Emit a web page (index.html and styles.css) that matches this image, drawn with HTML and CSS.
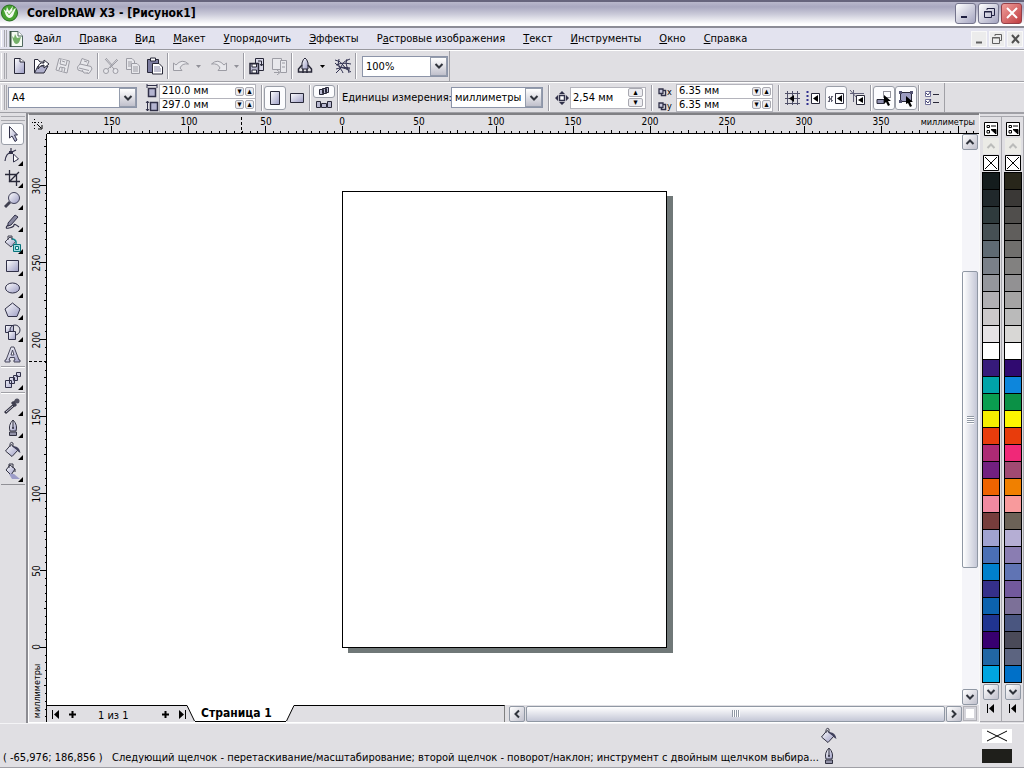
FILE: index.html
```html
<!DOCTYPE html>
<html lang="ru">
<head>
<meta charset="utf-8">
<title>CorelDRAW X3 - [Рисунок1]</title>
<link rel="stylesheet" href="styles.css">
</head>
<body>
<svg class="defs" aria-hidden="true">
  <defs>
    <linearGradient id="g" x1="0" y1="0" x2="1" y2="1"><stop offset="0" stop-color="#fff"/><stop offset="1" stop-color="#9c9cc4"/></linearGradient>
    <symbol id="down" viewBox="0 0 10 8"><path d="M1.5 2 5 5.5 8.500 2" fill="none" stroke="#30343c" stroke-width="2"/></symbol>
    <symbol id="flyout" viewBox="0 0 5 5"><path d="M5 0V5H0z" fill="#000"/></symbol>
    <symbol id="bucket" viewBox="0 0 18 18"><path d="M1.500 10 7 3.500 14 9 8 15.500z" fill="url(#g)" stroke="#303040"/><path d="M6 6V2.500Q7 .5 9 2V6" fill="none" stroke="#404050"/><path d="M8 5.500Q15 4 16.500 12 14 11 13 9z" fill="#40405c"/></symbol>
    <symbol id="pen" viewBox="0 0 18 18"><path d="M9 1Q4 6 6 12H12Q14 6 9 1z" fill="url(#g)" stroke="#303040"/><path d="M9 2V9" stroke="#303040"/><circle cx="9" cy="9" r="1" fill="#303040"/><path d="M5.500 13H12.500V16.500H5.500z" fill="#9292a8" stroke="#303040"/></symbol>
    <symbol id="leaf" viewBox="0 0 18 18"><circle cx="8.500" cy="9" r="8" fill="#48a332" stroke="#286d20"/><path d="M4 9 2.500 5 5 7 6 3 8 7 12 2 11 6 15 4 13 9Q12 14 8 14 5 13 4 9z" fill="#f4fbf0"/><path d="M6 8 8 11 13 5" fill="none" stroke="#78bc60"/></symbol>
    <symbol id="first" viewBox="0 0 9 9"><path d="M1.500 0V9" stroke="#000"/><path d="M8 0V9L3 4.500z"/></symbol>
    <symbol id="plus" viewBox="0 0 9 9"><path d="M4.500 1V8M1 4.500H8" stroke="#000" stroke-width="2"/></symbol>
    <symbol id="dup" viewBox="0 0 9 9"><path d="M3.500 2.500H7.500V7.500H3.500z" fill="#fff" stroke="#303048" stroke-width="1.500"/><path d="M1 1H5V5.500H1z" fill="#c8c8dc" stroke="#303048" stroke-width="1.300"/></symbol>
  </defs>
</svg>
<div class="app">
  <header class="titlebar">
    <svg class="i18"><use href="#leaf"/></svg>
    <h1>CorelDRAW X3 - [Рисунок1]</h1>
    <div class="winbtns">
      <button aria-label="Свернуть"><svg class="i18" viewBox="0 0 18 18"><path d="M4 13H10" stroke="#202040" stroke-width="2"/></svg></button>
      <button aria-label="Восстановить"><svg class="i18" viewBox="0 0 18 18"><path d="M7 6V4.500H14.500V11.500H12M4.500 7.500H11.500V13.500H4.500zM4 8H12" fill="none" stroke="#202040"/></svg></button>
      <button class="close" aria-label="Закрыть"><svg class="i18" viewBox="0 0 18 18"><path d="M4 4 14 14M14 4 4 14" stroke="#fff" stroke-width="2"/></svg></button>
    </div>
  </header>

  <nav class="menubar" aria-label="Меню">
    <span class="grip"></span>
    <svg class="i18" viewBox="0 0 18 18"><path d="M2.500 1.500H10L14.500 6V16.500H2.500z" fill="#f4faf2" stroke="#506860"/><path d="M10 1.500V6H14.500" fill="#fff" stroke="#506860"/><path d="M5 10 4 6 6 8 7 4 9 8 13 7 12 10Q11 14 8 14 6 13 5 10z" fill="#74b068"/><path d="M2.500 1V17" stroke="#385040" stroke-width="2"/></svg>
    <ul class="menus">
      <li><a href="#"><u>Ф</u>айл</a></li><li><a href="#"><u>П</u>равка</a></li><li><a href="#"><u>В</u>ид</a></li><li><a href="#"><u>М</u>акет</a></li><li><a href="#"><u>У</u>порядочить</a></li><li><a href="#"><u>Э</u>ффекты</a></li><li><a href="#">Р<u>а</u>стровые изображения</a></li><li><a href="#"><u>Т</u>екст</a></li><li><a href="#"><u>И</u>нструменты</a></li><li><a href="#"><u>О</u>кно</a></li><li><a href="#"><u>С</u>правка</a></li>
    </ul>
    <div class="docbtns">
      <button aria-label="Свернуть документ"><svg class="i14" viewBox="0 0 14 14"><path d="M4 10.500H10" stroke="#606060" stroke-width="2"/></svg></button>
      <button aria-label="Восстановить документ"><svg class="i14" viewBox="0 0 14 14"><path d="M5 4V2.500H11.500V8.500H10M2.500 5.500H9.500V11.500H2.500zM2 6H10" fill="none" stroke="#606060"/></svg></button>
      <button aria-label="Закрыть документ"><svg class="i14" viewBox="0 0 14 14"><path d="M4 3 11 11M11 3 4 11" stroke="#505050" stroke-width="2"/></svg></button>
    </div>
  </nav>

  <div class="toolbar">
    <span class="grip"></span>
    <button class="tb" aria-label="Создать"><svg class="i18" viewBox="0 0 18 18"><path d="M4.500 1.500H10L14.500 5V16.500H4.500z" fill="url(#g)" stroke="#282838"/><path d="M10 1.500V5H14.500" fill="#fff" stroke="#282838"/></svg></button>
    <button class="tb" aria-label="Открыть"><svg class="i18" viewBox="0 0 18 18"><path d="M2.500 16V2.500H6L8 5H12V8" fill="#fff" stroke="#282838"/><path d="M2.500 16 6 9H16L12 16z" fill="#b0b0cc" stroke="#282838"/><path d="M6 12Q6 5 12 6V3L17 7 12 11V8Q8 8 6 12z" fill="#fff" stroke="#282838"/></svg></button>
    <button class="tb" aria-label="Сохранить"><svg class="i18 off" viewBox="0 0 18 18"><path d="M5 1.500 15.500 4 13 16 2 13z"/><path d="M7 2 6 7 12 8.500 13 4M5 13 6 10 11 11 10 15M8 4 11 5M8 11V14"/></svg></button>
    <button class="tb" aria-label="Печать"><svg class="i18 off" viewBox="0 0 18 18"><path d="M4 7 6 1.500 13 4 11 9M1.500 10 4 7 15 9.500 16 12 13 16.500 2 13z"/><path d="M3 11 13 13.500M6 13 8 16 12 16M8 4 11 5"/></svg></button>
    <span class="sep"></span>
    <button class="tb" aria-label="Вырезать"><svg class="i18 off" viewBox="0 0 18 18"><path d="M3 2 12 12M15 2 6 12M4 1 10 8M16 3 8 11"/><circle cx="4" cy="14" r="2.500"/><circle cx="13.500" cy="14" r="2.500"/></svg></button>
    <button class="tb" aria-label="Копировать"><svg class="i18 off" viewBox="0 0 18 18"><path d="M2.500 1.500H8L10.500 4V12.500H2.500z"/><path d="M7.500 6.500H13L15.500 9V16.500H7.500zM9 10H14M9 12H14M9 14H14M4 5H8M4 7H7M4 9H7"/></svg></button>
    <button class="tb" aria-label="Вставить"><svg class="i18" viewBox="0 0 18 18"><path d="M1.500 2.500H12.500V15.500H1.500z" fill="#7c7ca0" stroke="#282838"/><path d="M4.500 1H9.500V4H4.500z" fill="#fff" stroke="#282838"/><path d="M6.500 6.500H13L16.500 10V17H6.500z" fill="#fff" stroke="#282838"/><path d="M8 10H14M8 12H15M8 14H15" stroke="#8888a8"/></svg></button>
    <span class="sep"></span>
    <button class="tb" aria-label="Отменить"><svg class="i18 off" viewBox="0 0 18 18"><path d="M1.500 13.500V6L4 8Q10 1 16.500 7 10 6 8 11L10 13.500z"/></svg></button>
    <button class="tb narrow" aria-label="Список отмены"><svg class="i7" viewBox="0 0 7 7"><path d="M1 2H6L3.500 5z" fill="#909098"/></svg></button>
    <span class="space"></span>
    <button class="tb" aria-label="Вернуть"><svg class="i18 off" viewBox="0 0 18 18"><path d="M16.500 13.500V6L14 8Q8 1 1.500 7 8 6 10 11L8 13.500z"/></svg></button>
    <button class="tb narrow" aria-label="Список возврата"><svg class="i7" viewBox="0 0 7 7"><path d="M1 2H6L3.500 5z" fill="#909098"/></svg></button>
    <span class="sep"></span>
    <button class="tb" aria-label="Импорт"><svg class="i18" viewBox="0 0 18 18"><path d="M7.500 1.500H15.500V13.500H7.500z" fill="#d8d8e8" stroke="#282838"/><path d="M2 6.500H10.500V16.500H2z" fill="#b8b8d0" stroke="#282838" stroke-width="1.500"/><path d="M4 7H8.500V10H4zM4 13H8.500V16H4z" stroke="#282838" fill="#fff"/><path d="M10 4H13.500V9M12 7 13.500 9 15 7" stroke="#282838" fill="none"/></svg></button>
    <button class="tb" aria-label="Экспорт"><svg class="i18 off" viewBox="0 0 18 18"><path d="M2.500 1.500H11.500V12.500H2.500z"/><path d="M10.500 3.500H16.500V15.500H10.500zM12 6H15M12 10H15M4 15.500H9M7 13 10 15.500 7 18"/></svg></button>
    <span class="sep"></span>
    <button class="tb" aria-label="Запуск приложений"><svg class="i18" viewBox="0 0 18 18"><path d="M6 12V6Q7 2 9 1 11 2 12 6V12z" fill="url(#g)" stroke="#282838"/><path d="M6 8 2.500 12V15H15.500V12L12 8M7 12V16M11 12V16M2 15H6M12 15H16" fill="none" stroke="#282838" stroke-width="1.500"/></svg></button>
    <button class="tb narrow" aria-label="Список приложений"><svg class="i7" viewBox="0 0 7 7"><path d="M1 2H6L3.500 5z"/></svg></button>
    <span class="space"></span>
    <button class="tb" aria-label="Интернет-сообщество"><svg class="i18" viewBox="0 0 18 18"><path d="M1 3Q7 4 9 8T17 15M16 2Q9 4 8 8T2 16M2 8Q8 5 17 7M5 2Q3 7 6 11T9 16M13 2Q11 6 13 10T15 16M2 12Q9 9 16 11M1 6Q6 12 16 12" fill="none" stroke="#303050"/></svg></button>
    <span class="sep"></span>
    <label class="combo zoom"><select aria-label="Масштаб"><option>100%</option></select><span class="drop"><svg class="i10"><use href="#down"/></svg></span></label>
    <span class="edge"></span>
  </div>

  <div class="toolbar props">
    <span class="grip"></span>
    <label class="combo paper"><select aria-label="Формат бумаги"><option>A4</option></select><span class="drop"><svg class="i10"><use href="#down"/></svg></span></label>
    <svg class="pairicon" viewBox="0 0 14 28"><path d="M2 1.500H12M2 0V4M12 0V4" stroke="#303048"/><path d="M3.500 4.500H10.500V12.500H3.500zM5.500 18.500H12.500V26.500H5.500z" fill="#b4b4d0" stroke="#303048" stroke-width="1.500"/><path d="M2.500 17V27M1 19 2.500 17 4 19M1 25 2.500 27 4 25" fill="none" stroke="#303048"/></svg>
    <div class="pair"><div><input value="210.0 мм" aria-label="Ширина"><button class="sp" aria-label="Меньше">▾</button><button class="sp" aria-label="Больше">▴</button></div><div><input value="297.0 мм" aria-label="Высота"><button class="sp" aria-label="Меньше">▾</button><button class="sp" aria-label="Больше">▴</button></div></div>
    <span class="space"></span><span class="sep"></span>
    <button class="tb on" aria-label="Книжная"><svg class="i18" viewBox="0 0 18 18"><path d="M4.500 2.500H13.500V15.500H4.500z" fill="url(#g)" stroke="#282838"/></svg></button>
    <button class="tb" aria-label="Альбомная"><svg class="i18" viewBox="0 0 18 18"><path d="M2.500 4.500H15.500V13.500H2.500z" fill="url(#g)" stroke="#282838"/></svg></button>
    <span class="sep"></span>
    <div class="stack"><button class="half on" aria-label="Все страницы"><svg viewBox="0 0 18 10"><path d="M4.500 3.500H8.500V8.500H4.500zM7.500 2.500H11.500V7.500H7.500zM10.500 1.500H13.500V6.500H10.500z" fill="#b8b8d0" stroke="#282838"/></svg></button><button class="half" aria-label="Текущая страница"><svg viewBox="0 0 18 10"><path d="M1.500 2.500H5.500V8.500H1.500zM6.500 4.500H11.500V8.500H6.500zM12.500 2.500H16.500V8.500H12.500z" fill="#b8b8d0" stroke="#282838"/></svg></button></div>
    <span class="sep"></span>
    <label class="units" for="units">Единицы измерения:</label>
    <span class="combo unitbox"><select id="units"><option>миллиметры</option></select><span class="drop"><svg class="i10"><use href="#down"/></svg></span></span>
    <span class="space"></span><span class="sep"></span><span class="space"></span>
    <svg class="i14" viewBox="0 0 14 14"><path d="M4.500 4.500H9.500V9.500H4.500z" fill="#fff" stroke="#303048" stroke-width="1.500"/><path d="M7 0 10 3H4zM7 14 10 11H4zM0 7 3 4V10zM14 7 11 4V10z" fill="#303048"/></svg>
    <div class="nudge"><input value="2,54 мм" aria-label="Шаг сдвига"><span><button class="sp" aria-label="Больше">▴</button><button class="sp" aria-label="Меньше">▾</button></span></div>
    <span class="space"></span><span class="sep"></span><span class="space"></span>
    <div class="xy"><span><svg class="i9"><use href="#dup"/></svg><b>x</b></span><span><svg class="i9"><use href="#dup"/></svg><b>y</b></span></div>
    <div class="pair"><div><input value="6.35 мм" aria-label="Смещение x"><button class="sp" aria-label="Меньше">▾</button><button class="sp" aria-label="Больше">▴</button></div><div><input value="6.35 мм" aria-label="Смещение y"><button class="sp" aria-label="Меньше">▾</button><button class="sp" aria-label="Больше">▴</button></div></div>
    <span class="space"></span><span class="sep"></span>
    <button class="tb" aria-label="Привязка к сетке"><svg class="i18" viewBox="0 0 18 18"><path d="M4.500 2V16M9.500 2V16M14.500 2V16M2 4.500H17M2 9.500H17M2 14.500H17" stroke="#505068"/><path d="M11 6V13L6 9.500z"/></svg></button>
    <button class="tb" aria-label="Привязка к направляющим"><svg class="i18" viewBox="0 0 18 18"><path d="M2.500 2V16" stroke="#303090" stroke-width="2" stroke-dasharray="2 2"/><path d="M6.500 4.500H14.500V14.500H6.500z" fill="#fff" stroke="#282838"/><path d="M13 6V13L8 9.500z"/></svg></button>
    <button class="tb on" aria-label="Привязка к объектам"><svg class="i18" viewBox="0 0 18 18"><path d="M2.500 7V13M4.500 7V13M1 8 6 12M6 7 1 13" stroke="#606070"/><path d="M8.500 4.500H16.500V14.500H8.500z" fill="#fff" stroke="#282838"/><path d="M15 6V13L10 9.500z"/></svg></button>
    <button class="tb" aria-label="Динамические направляющие"><svg class="i18" viewBox="0 0 18 18"><path d="M1 4.500H15M4.500 1V13M1 1 8 9" stroke="#606078"/><path d="M7.500 6.500H15.500V15.500H7.500z" fill="#fff" stroke="#282838"/><path d="M14 8V14L9 11z"/></svg></button>
    <span class="sep"></span>
    <button class="tb on" aria-label="Рисовать сложные объекты"><svg class="i18" viewBox="0 0 18 18"><path d="M8.500 2.500H15.500V8.500H8.500z" fill="none" stroke="#282838" stroke-dasharray="1 1"/><path d="M2 10.500H9V14.500H2z" fill="#9090b0" stroke="#282838"/><path d="M9 6 16 12 13 12 15 16 13 17 11 13 9 15z"/></svg></button>
    <button class="tb on" aria-label="Рассматривать как с заливкой"><svg class="i18" viewBox="0 0 18 18"><path d="M3.500 3.500H14.500V12.500H3.500z" fill="#9c9cc0" stroke="#282838"/><path d="M2 2H5V5H2zM13 2H16V5H13zM2 11H5V14H2z" fill="#505070"/><path d="M9 7 16 13 13 13 15 17 13 18 11 14 9 15z"/></svg></button>
    <span class="sep"></span>
    <button class="tb" aria-label="Параметры"><svg class="i18" viewBox="0 0 18 18"><path d="M2.500 2.500H7.500V7.500H2.500zM2.500 10.500H7.500V15.500H2.500z" fill="#fff" stroke="#707098"/><path d="M3 4 5 6 8 2M3 12 5 14 8 10" fill="none" stroke="#404070"/><path d="M10 5.500H16M10 13.500H16" stroke="#282838"/></svg></button>
    <span class="edge"></span>
  </div>

  <main class="work">
    <aside class="toolbox" aria-label="Инструменты">
      <span class="hgrip"></span>
      <button class="tool on" aria-label="Указатель"><svg class="i18" viewBox="0 0 18 18"><path d="M5.500 1.500V13L8 11 11 16.500 13 15 10.500 10H13.500z" fill="url(#g)" stroke="#303048"/></svg></button>
      <button class="tool" aria-label="Форма"><svg class="i18" viewBox="0 0 18 18"><path d="M1 14Q2 6 7 5.500L7 1M7 5.500 12 3" fill="none" stroke="#303048" stroke-width="1.200"/><path d="M5 4H9V7H5z" fill="#303048"/><path d="M9.500 7V15L14.500 12z" fill="#fff" stroke="#303048"/></svg><svg class="fly"><use href="#flyout"/></svg></button>
      <button class="tool" aria-label="Обрезка"><svg class="i18" viewBox="0 0 18 18"><path d="M5.500 1V12.500H16M1 5.500H12.500V17M5 13 15 3" fill="none" stroke="#282838" stroke-width="1.300"/></svg><svg class="fly"><use href="#flyout"/></svg></button>
      <button class="tool" aria-label="Масштаб"><svg class="i18" viewBox="0 0 18 18"><path d="M6 11 1 16" stroke="#404050" stroke-width="3"/><circle cx="10" cy="7" r="5.500" fill="url(#g)" stroke="#404058"/></svg><svg class="fly"><use href="#flyout"/></svg></button>
      <button class="tool" aria-label="Свободная форма"><svg class="i18" viewBox="0 0 18 18"><path d="M4 10 11 2 14 4 7 12 4 13z" fill="#8888a0" stroke="#303048"/><path d="M4 12Q0 16 5 15T10 12 15 14" fill="none" stroke="#303048" stroke-width="1.200"/></svg><svg class="fly"><use href="#flyout"/></svg></button>
      <button class="tool" aria-label="Интеллектуальная заливка"><svg class="i18" viewBox="0 0 18 18"><path d="M1 7 6 2 12 6 7 12z" fill="url(#g)" stroke="#404050"/><path d="M4 5V1H8V5" fill="none" stroke="#404050"/><path d="M8 4Q13 4 12 10" fill="none" stroke="#148c94" stroke-width="1.500"/><path d="M9.500 9.500H16.500V16.500H9.500z" fill="#a4dce0" stroke="#08747c"/><path d="M11.500 11.500H14.500V14.500H11.500z" fill="#d4f0f4" stroke="#08747c"/></svg><svg class="fly"><use href="#flyout"/></svg></button>
      <button class="tool" aria-label="Прямоугольник"><svg class="i18" viewBox="0 0 18 18"><path d="M2.500 3.500H14.500V14.500H2.500z" fill="url(#g)" stroke="#303048"/></svg><svg class="fly"><use href="#flyout"/></svg></button>
      <button class="tool" aria-label="Эллипс"><svg class="i18" viewBox="0 0 18 18"><ellipse cx="8.500" cy="9" rx="7" ry="5" fill="url(#g)" stroke="#303048"/></svg><svg class="fly"><use href="#flyout"/></svg></button>
      <button class="tool" aria-label="Многоугольник"><svg class="i18" viewBox="0 0 18 18"><path d="M8.500 2 16 8 13 15.500H4L1 8z" fill="url(#g)" stroke="#303048"/></svg><svg class="fly"><use href="#flyout"/></svg></button>
      <button class="tool" aria-label="Основные фигуры"><svg class="i18" viewBox="0 0 18 18"><path d="M1.500 2.500H9.500V9.500H1.500z" fill="url(#g)" stroke="#303048"/><circle cx="11" cy="7" r="5" fill="none" stroke="#303048"/><path d="M4.500 8.500H11.500V16.500H4.500z" fill="url(#g)" stroke="#303048"/></svg><svg class="fly"><use href="#flyout"/></svg></button>
      <button class="tool" aria-label="Текст"><svg class="i18" viewBox="0 0 18 18"><path d="M7 2H10L15 15H16V17H10V15H11L10.500 12.500H6L5 15H6V17H1V15H2z" fill="url(#g)" stroke="#48485c"/><path d="M7 10H10L8.500 5z" fill="#fff" stroke="#48485c"/></svg></button>
      <hr>
      <button class="tool" aria-label="Перетекание"><svg class="i18" viewBox="0 0 18 18"><path d="M12.500 1.500H16.500V5.500H12.500zM9.500 4.500H13.500V9.500H9.500zM5.500 6.500H10.500V12.500H5.500zM1.500 9.500H7.500V16.500H1.500z" fill="url(#g)" stroke="#303048"/></svg><svg class="fly"><use href="#flyout"/></svg></button>
      <hr>
      <button class="tool" aria-label="Пипетка"><svg class="i18" viewBox="0 0 18 18"><path d="M1 16 10 8" stroke="#303040" stroke-width="3"/><path d="M2 15 9 9" stroke="#d0d0dc"/><path d="M8 5 12 9M10 6 14 3" stroke="#404050" stroke-width="3"/><circle cx="13" cy="4" r="2.500" fill="#505060"/></svg><svg class="fly"><use href="#flyout"/></svg></button>
      <button class="tool" aria-label="Абрис"><svg class="i18"><use href="#pen"/></svg><svg class="fly"><use href="#flyout"/></svg></button>
      <button class="tool" aria-label="Заливка"><svg class="i18"><use href="#bucket"/></svg><svg class="fly"><use href="#flyout"/></svg></button>
      <button class="tool" aria-label="Интерактивная заливка"><svg class="i18" viewBox="0 0 18 18"><path d="M2 7 6 2 11 6 7 12z" fill="url(#g)" stroke="#303040"/><path d="M5 5V1H9V5M11 6V9" fill="none" stroke="#303040"/><path d="M5 11H10L16 16H8z" fill="#9c9cc8"/></svg><svg class="fly"><use href="#flyout"/></svg></button>
    </aside>

    <section class="doc" aria-label="Документ">
      <div class="corner"><svg class="i18" viewBox="0 0 18 18"><path d="M5.500 4V15M3 7.500H14" stroke="#000" stroke-dasharray="1 2"/><path d="M8 9 12 13M13 10V14H9" fill="none" stroke="#000"/></svg></div>
      <svg class="hruler">
        <defs><pattern id="ht" x="295" y="0" width="77" height="18" patternUnits="userSpaceOnUse"><path d="M0 11H1V18H0zM8 16H9V18H8zM15 16H16V18H15zM23 16H24V18H23zM31 16H32V18H31zM38 15H39V18H38zM46 16H47V18H46zM54 16H55V18H54zM62 16H63V18H62zM69 16H70V18H69z"/></pattern></defs>
        <rect width="100%" height="18" fill="url(#ht)"/>
        <path d="M194.500 2V18" stroke="#000" stroke-dasharray="3 2"/>
        <g text-anchor="middle"><text x="65" y="10">150</text><text x="142" y="10">100</text><text x="219" y="10">50</text><text x="295" y="10">0</text><text x="372" y="10">50</text><text x="449" y="10">100</text><text x="526" y="10">150</text><text x="603" y="10">200</text><text x="680" y="10">250</text><text x="757" y="10">300</text><text x="834" y="10">350</text></g>
        <text class="mm" x="100%" dx="-4" y="10" text-anchor="end">миллиметры</text>
      </svg>
      <svg class="vruler">
        <defs><pattern id="vt" x="0" y="513" width="18" height="77" patternUnits="userSpaceOnUse"><path d="M11 0V1H18V0zM16 8V9H18V8zM16 15V16H18V15zM16 23V24H18V23zM16 31V32H18V31zM15 38V39H18V38zM16 46V47H18V46zM16 54V55H18V54zM16 62V63H18V62zM16 69V70H18V69z"/></pattern></defs>
        <rect width="18" height="100%" fill="url(#vt)"/>
        <path d="M0 227.500H18" stroke="#000" stroke-dasharray="3 2"/>
        <g text-anchor="middle"><text transform="translate(11 52) rotate(-90)">300</text><text transform="translate(11 129) rotate(-90)">250</text><text transform="translate(11 206) rotate(-90)">200</text><text transform="translate(11 283) rotate(-90)">150</text><text transform="translate(11 360) rotate(-90)">100</text><text transform="translate(11 437) rotate(-90)">50</text><text transform="translate(11 513) rotate(-90)">0</text><text class="mm" transform="translate(11 557) rotate(-90)">миллиметры</text></g>
      </svg>
      <div class="canvas"><div class="page"></div></div>
      <div class="vscroll">
        <button class="sb" aria-label="Вверх"><svg class="i10 up"><use href="#down"/></svg></button>
        <div class="vtrack"><div class="vthumb"><i></i></div></div>
        <button class="sb" aria-label="Вниз"><svg class="i10"><use href="#down"/></svg></button>
      </div>
      <div class="bottom">
        <div class="pages">
          <button aria-label="Первая страница"><svg class="i9"><use href="#first"/></svg></button>
          <button aria-label="Добавить страницу в начало"><svg class="i9"><use href="#plus"/></svg></button>
          <span class="count">1 из 1</span>
          <button aria-label="Добавить страницу в конец"><svg class="i9"><use href="#plus"/></svg></button>
          <button aria-label="Последняя страница"><svg class="i9 flip"><use href="#first"/></svg></button>
        </div>
        <div class="tab"><svg viewBox="0 0 8 17"><path d="M0 0 7.500 16.500H8V0z" fill="#fff"/><path d="M0 .5 7.500 16" stroke="#000"/></svg><button>Страница 1</button><svg viewBox="0 0 8 17"><path d="M8 0 .5 16.500H0V0z" fill="#fff"/><path d="M8 .5 .5 16" stroke="#000"/></svg></div>
        <div class="tabrest"></div>
        <div class="hscroll">
          <button class="sb" aria-label="Влево"><svg class="i10 left"><use href="#down"/></svg></button>
          <div class="hthumb"><i></i></div>
          <button class="sb" aria-label="Вправо"><svg class="i10 right"><use href="#down"/></svg></button>
        </div>
      </div>
      <div class="navcell"><button aria-label="Навигатор"></button></div>
    </section>

    <aside class="palettes" aria-label="Палитры">
      <div class="palette" data-palette="cmyk"></div>
      <div class="palette" data-palette="rgb"></div>
    </aside>
  </main>

  <footer class="status">
    <span></span><span></span><svg class="i18"><use href="#bucket"/></svg>
    <div class="chip none"><svg viewBox="0 0 30 14"><path d="M5 2 25 12M25 2 5 12" stroke="#000"/></svg></div>
    <span>( -65,976; 186,856 )</span>
    <span class="msg">Следующий щелчок - перетаскивание/масштабирование; второй щелчок - поворот/наклон; инструмент с двойным щелчком выбира...</span>
    <svg class="i18"><use href="#pen"/></svg>
    <div class="chip ink"></div>
  </footer>
</div>
<script src="script.js"></script>
</body>
</html>
```
FILE: styles.css
```css
* { box-sizing: border-box; }
body { margin: 0; background: #e0dfe3; color: #000; font: 11px/14px "DejaVu Sans Condensed", "DejaVu Sans", sans-serif; }
button, input, select { margin: 0; padding: 0; font: inherit; color: inherit; }
button { display: flex; align-items: center; justify-content: center; border: 0; background: none; }
svg { display: block; flex: none; }
.defs { position: absolute; width: 0; height: 0; }
.i7 { width: 7px; height: 7px; }
.i9 { width: 9px; height: 9px; }
.i10 { width: 10px; height: 8px; }
.i14 { width: 14px; height: 14px; }
.i18 { width: 18px; height: 18px; }
.up { transform: rotate(180deg); }
.left { transform: rotate(90deg); }
.right { transform: rotate(-90deg); }
.flip { transform: scaleX(-1); }
.off { fill: #e8e8ec; stroke: #9c9ca4; }

.app { display: grid; grid-template-rows: 28px 22px 32px 31px 1fr 45px; height: 100vh; min-height: 600px; }

.titlebar { display: flex; align-items: center; gap: 8px; padding: 0 2px 2px 1px; border-top: 2px solid #66647c; border-bottom: 2px solid #8c8c96; background: linear-gradient(#b9b8cc, #a9a8c0 20%, #c9c9d8 50%, #fff 92%); }
.titlebar h1 { flex: 1; margin: 0; font: bold 12px/18px "DejaVu Sans Condensed", sans-serif; }
.winbtns { display: flex; gap: 2px; }
.winbtns button { width: 21px; height: 21px; border: 1px solid #74748c; border-radius: 3px; background: linear-gradient(135deg, #fff, #a4a4c0); }
.winbtns .close { background: linear-gradient(135deg, #f0a09c, #c03c40); border-color: #944048; }

.menubar { display: flex; align-items: center; border-bottom: 1px solid #98989e; background: #e3e3ef; }
.grip { flex: none; align-self: stretch; width: 6px; margin: 2px 1px; border-left: 1px solid #fff; border-right: 1px solid #a8a8ae; }
.grip::before { content: ""; display: block; width: 2px; height: 100%; border-right: 1px solid #a8a8ae; }
.menus { display: flex; flex: 1; gap: 18px; margin: 0; padding: 1px 0 0 8px; list-style: none; white-space: nowrap; }
.menus a { color: inherit; text-decoration: none; }
.docbtns { display: flex; gap: 2px; padding-right: 1px; }
.docbtns button { width: 16px; height: 16px; background: #ececec; border: 1px solid #f8f8f8; }

.toolbar { display: flex; align-items: center; border-top: 1px solid #fff; border-bottom: 1px solid #a0a0a6; min-width: 0; }
.tb { flex: none; width: 22px; height: 24px; }
.narrow { width: 12px; }
.on { border: 1px solid #9a9ea8; border-radius: 3px; background: #fcfcfe; }
.sep { flex: none; width: 2px; height: 26px; margin: 0 1px; border-left: 1px solid #9c9ca4; border-right: 1px solid #fff; }
.space { flex: none; width: 4px; }
.edge { align-self: stretch; width: 2px; border-right: 1px solid #a0a0a6; }
.combo { display: grid; flex: none; height: 21px; border: 1px solid #8c94a8; background: #fff; }
.combo > * { grid-area: 1 / 1; }
.combo select { width: 100%; appearance: none; border: 0; padding: 1px 0 0 3px; background: none; }
.drop { justify-self: end; display: flex; align-items: center; justify-content: center; width: 17px; border: 1px solid #949cac; background: linear-gradient(#fff, #c0c0cc); pointer-events: none; }
.zoom { width: 86px; margin-left: 4px; }
.paper { width: 129px; }
.unitbox { width: 92px; }
.units { flex: none; width: 109px; margin-left: 2px; white-space: nowrap; }
.pairicon { width: 14px; height: 28px; margin-left: 8px; }
.pair { flex: none; width: 97px; border: 1px solid #b4b4bc; background: #fff; }
.pair > div { display: flex; align-items: center; gap: 1px; height: 13px; padding-right: 1px; }
.pair > div + div { border-top: 1px solid #b4b4bc; }
.pair input, .nudge input { flex: 1; min-width: 0; width: 0; border: 0; padding-left: 2px; background: none; height: 12px; }
.sp { flex: none; width: 9px; height: 9px; border: 1px solid #a8a8b0; border-radius: 2px; background: #ececf0; font-size: 9px; line-height: 7px; }
.stack { flex: none; width: 22px; margin: 0 1px; }
.half { width: 22px; height: 13px; }
.half svg { width: 18px; height: 10px; }
.nudge { display: flex; align-items: center; flex: none; width: 76px; height: 22px; margin-left: 1px; padding-right: 2px; border: 1px solid #b4b4bc; background: #fff; }
.nudge .sp { width: 15px; margin: 1px 0; }
.xy { display: grid; gap: 2px; width: 18px; }
.xy span { display: flex; align-items: end; height: 12px; }
.xy b { font-size: 9px; line-height: 9px; font-weight: normal; }

.work { display: grid; grid-template-columns: 28px minmax(0, 1fr) 45px; min-height: 0; }
.toolbox { padding: 3px 1px; border-right: 2px solid #8c8c92; }
.hgrip { display: block; height: 5px; margin-bottom: 2px; border-top: 1px solid #a8a8ae; border-bottom: 1px solid #a8a8ae; }
.tool { position: relative; width: 24px; height: 22px; }
.tool.on { width: 23px; }
.fly { position: absolute; right: 2px; bottom: 1px; width: 5px; height: 5px; }
.toolbox hr { height: 2px; margin: 1px 0; border: 0; border-top: 1px solid #a0a0a6; background: #fff; }
.toolbox::after { content: ""; display: block; margin-top: 1px; border-top: 1px solid #909096; }

.doc { display: grid; grid-template: 19px minmax(0, 1fr) 17px / 18px minmax(0, 1fr) 17px; border-top: 2px solid #808084; border-left: 1px solid #fff; border-bottom: 1px solid #fff; }
.hruler { grid-column: 2 / 4; width: 100%; height: 19px; border-bottom: 1px solid #000; }
.vruler { grid-column: 1; grid-row: 2 / 4; width: 18px; height: 100%; border-right: 1px solid #000; }
.hruler text, .vruler text { font-size: 10px; }
.hruler .mm, .vruler .mm { font-size: 9px; }
.canvas { grid-column: 2; grid-row: 2; display: flex; align-items: center; justify-content: center; overflow: hidden; background: #fff; }
.page { width: 325px; height: 457px; border: 1px solid #000; background: #fff; box-shadow: 6px 5px #707878; }
.vscroll { grid-column: 3; grid-row: 2; display: flex; flex-direction: column; background: #f5f5f9; }
.sb { flex: none; width: 16px; height: 16px; border: 1px solid #9098a4; border-radius: 2px; background: linear-gradient(135deg, #fff, #c0c0cc); }
.vtrack { flex: 1; display: grid; grid-template-rows: 121fr 297fr 121fr; min-height: 0; }
.vthumb { grid-row: 2; display: flex; align-items: center; justify-content: center; width: 16px; border: 1px solid #9098a4; border-radius: 2px; background: linear-gradient(90deg, #fff, #c4c7d6); }
.vthumb i { width: 7px; height: 8px; background: repeating-linear-gradient(#9098a4 0 1px, #fff 1px 2px); }
.bottom { grid-column: 2; grid-row: 3; display: flex; min-width: 0; }
.pages { flex: none; display: flex; align-items: center; gap: 8px; width: 140px; padding-left: 4px; border-top: 1px solid #000; }
.count { width: 70px; padding: 3px 0 0 13px; }
.tab { display: flex; flex: none; }
.tab svg { width: 8px; height: 17px; }
.tab button { width: 91px; padding-right: 8px; background: #fff; border-bottom: 1px solid #000; font: bold 12px/16px "DejaVu Sans Condensed", sans-serif; }
.tabrest { flex: 211 1 0; border-top: 1px solid #000; border-right: 1px solid #808080; }
.hscroll { flex: 454 1 0; display: flex; align-items: center; gap: 1px; padding-left: 4px; }
.hthumb { flex: 1; display: flex; align-items: center; justify-content: center; height: 16px; border: 1px solid #9098a4; border-radius: 2px; background: linear-gradient(#fff, #c4c7d6); }
.hthumb i { width: 8px; height: 7px; background: repeating-linear-gradient(90deg, #9098a4 0 1px, #fff 1px 2px); }
.navcell { grid-column: 3; grid-row: 3; padding: 1px; }
.navcell button { width: 14px; height: 15px; border: 3px solid #d4d4da; outline: 1px solid #b0b0b6; outline-offset: -1px; background: #fff; }

.palettes { display: grid; grid-template-columns: 22px 22px; padding: 2px 0 1px; border-top: 1px solid #a0a0a6; border-left: 1px solid #f8f8f8; }
.palette { display: flex; flex-direction: column; align-items: center; padding-top: 4px; border-top: 1px solid #a8a8ae; border-right: 1px solid #a8a8ae; border-bottom: 1px solid #a8a8ae; }
.palette .head { width: 16px; height: 16px; margin-bottom: 1px; }
.palette .head svg { width: 16px; height: 16px; }
.palette .dim { background: #ebebe6; }
.palette .dim svg { width: 10px; height: 8px; opacity: .25; }
.swatches { width: 18px; border-top: 1px solid #000; }
.swatches button { width: 18px; height: 17px; border: 1px solid #000; border-top: 0; }
.palette .sb { margin-top: 1px; }
.palette .end { width: 16px; height: 17px; }

.status { display: grid; grid-template: 20px 20px / 109px 708px minmax(18px, 1fr) 41px; align-items: center; align-content: start; padding: 2px 1px 0 3px; border-top: 1px solid #f4f4f6; border-bottom: 1px solid #a0a0a6; white-space: nowrap; }
.status > span { padding-top: 3px; }
.chip { width: 30px; height: 14px; }
.none { background: #fff; }
.ink { background: #1f1f1b; }
```
FILE: script.js
```js
const palettes = {
  cmyk: ["#141c1d", "#20282b", "#2f3b3d", "#465054", "#5f6a73", "#7a8089", "#94969c", "#b0afb3", "#cbc8ca", "#e5e2e5", "#ffffff", "#361a7a", "#00a3a8", "#0a9e50", "#f5ef00", "#e83c0c", "#ad2a75", "#722080", "#ee6300", "#f089a0", "#763d3c", "#a0a2d0", "#4a6fb5", "#0080cc", "#35308a", "#0c62ae", "#203490", "#380070", "#2166a4", "#00a5e0"],
  rgb: ["#28261a", "#3a3836", "#504e4c", "#605e5c", "#706f6d", "#828180", "#929193", "#a5a4a4", "#bababa", "#d8d7d5", "#ffffff", "#300a70", "#0d86dc", "#0b9146", "#fcf600", "#e83c0c", "#f02878", "#a14a72", "#f08000", "#f89a9c", "#6c6257", "#b5aed4", "#8a7db2", "#6074b4", "#72599c", "#7c7098", "#4a5680", "#4a4a58", "#5c6480", "#0070c8"]
};

document.querySelectorAll(".palette").forEach((el) => {
  const swatches = palettes[el.dataset.palette]
    .map((c) => `<button style="background:${c}" aria-label="Цвет ${c}"></button>`)
    .join("");
  el.innerHTML = `
    <button class="head" aria-label="Меню палитры"><svg viewBox="0 0 16 16"><path d="M1.500 1.500H14.500V14.500H1.500z" fill="#fff" stroke="#000"/><path d="M4 4.500H6.500V6.500H4zM4 9.500H6.500V12H4z" fill="none" stroke="#000"/><path d="M8 5H13M8 8.500H13V13z" stroke="#000"/></svg></button>
    <button class="head dim" aria-label="Прокрутить вверх"><svg class="up"><use href="#down"/></svg></button>
    <button class="head" aria-label="Нет цвета"><svg viewBox="0 0 16 16"><path d="M.5 .5H15.500V15.500H.5z" fill="#fff" stroke="#000"/><path d="M2 2 14 14M14 2 2 14" stroke="#000"/></svg></button>
    <div class="swatches">${swatches}</div>
    <button class="sb" aria-label="Прокрутить вниз"><svg class="i10"><use href="#down"/></svg></button>
    <button class="end" aria-label="Развернуть палитру"><svg class="i9"><use href="#first"/></svg></button>`;
});
```
